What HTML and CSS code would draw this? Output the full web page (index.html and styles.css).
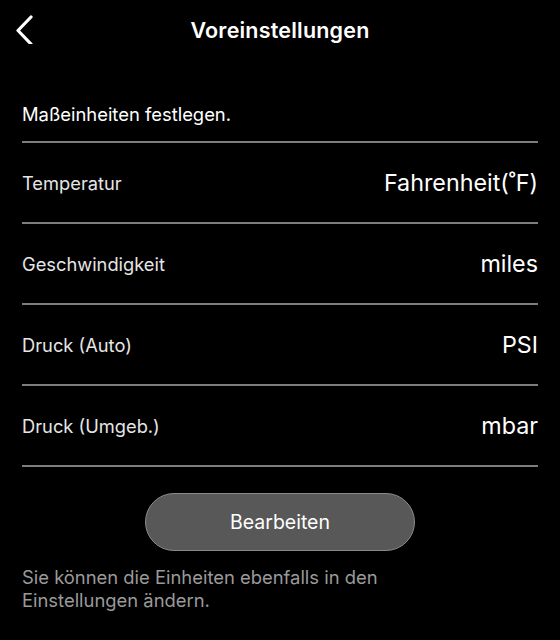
FILE: index.html
```html
<!DOCTYPE html>
<html lang="de">
<head>
  <meta charset="UTF-8">
  <title>Voreinstellungen</title>
  <meta name="viewport" content="width=device-width, initial-scale=1.0">
  <link rel="stylesheet" href="styles.css">
</head>
<body>
  <div class="screen">
    <div class="top-bar">
      <button class="back-btn" aria-label="Zurück">
        <svg width="20" height="30" viewBox="0 0 20 30">
          <polyline points="16,3 3,16.5 16,30" fill="none" stroke="#fff" stroke-width="3.2" stroke-linecap="round" stroke-linejoin="round"/>
        </svg>
      </button>
      <div class="top-title">Voreinstellungen</div>
    </div>
    <!-- Units list -->
    <div class="units">
      <div class="units-intro">Maßeinheiten festlegen.</div>
      <div class="unit-row">
        <span class="unit-label">Temperatur</span>
        <span class="unit-value">Fahrenheit(˚F)</span>
      </div>
      <div class="unit-row">
        <span class="unit-label">Geschwindigkeit</span>
        <span class="unit-value">miles</span>
      </div>
      <div class="unit-row">
        <span class="unit-label">Druck (Auto)</span>
        <span class="unit-value">PSI</span>
      </div>
      <div class="unit-row">
        <span class="unit-label">Druck (Umgeb.)</span>
        <span class="unit-value">mbar</span>
      </div>
    </div>
    <div class="actions">
      <button class="edit-btn">Bearbeiten</button>
    </div>
    <p class="hint">Sie können die Einheiten ebenfalls in den<br>Einstellungen ändern.</p>
  </div>
</body>
</html>
```

FILE: styles.css
```css
body {
  background: #000;
  margin: 0;
  padding: 0;
  font-family: 'Inter', 'Roboto', sans-serif;
  color: #fff;
}
.screen {
  width: 560px;
  height: 640px;
  overflow: hidden;
}
.top-bar {
  height: 60px;
  display: flex;
  align-items: center;
  justify-content: center;
  position: relative;
}
.back-btn {
  position: absolute;
  left: 15px;
  top: 14px;
  background: none;
  border: none;
  padding: 0;
  cursor: pointer;
}
.top-title {
  font-size: 21.5px;
  font-weight: 600;
  letter-spacing: 0.2px;
}
/* Units */
.units {
  margin: 0 22px;
}
.units-intro {
  height: 81px;
  box-sizing: border-box;
  display: flex;
  align-items: flex-end;
  padding-bottom: 16px;
  font-size: 18.4px;
  border-bottom: 2px solid #7d7d7d;
  margin-top: 2px;
}
.unit-row {
  height: 81px;
  box-sizing: border-box;
  display: flex;
  align-items: center;
  justify-content: space-between;
  border-bottom: 2px solid #7d7d7d;
}
.unit-label {
  font-size: 18.3px;
  color: #e6e6e6;
}
.unit-value {
  font-size: 23.3px;
  color: #fff;
}
.actions {
  display: flex;
  justify-content: center;
  margin-top: 26px;
}
.edit-btn {
  width: 270px;
  height: 58px;
  border-radius: 29px;
  background: #585858;
  border: 1.5px solid #8a8a8a;
  color: #fff;
  font-family: inherit;
  font-size: 19.5px;
  cursor: pointer;
}
.hint {
  margin: 15px 22px 0;
  font-size: 18.4px;
  line-height: 23px;
  color: #9a9a9a;
}
```
